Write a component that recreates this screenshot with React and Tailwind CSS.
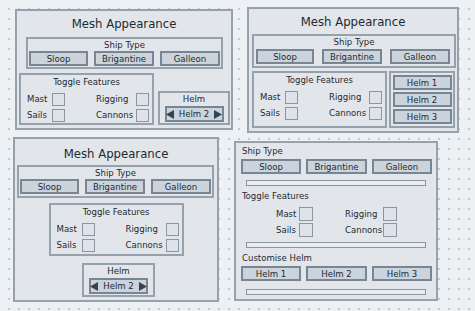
import React from 'react';

const box = 'border-2 border-[#95a1ab] bg-[#e2e6ea]';
const btn = 'border-2 border-[#778692] bg-[#cbd4dc] flex items-center justify-center text-[9.5px] leading-none whitespace-nowrap';
const check = 'border-[1.5px] border-[#8a97a2] bg-[#dde3e8]';

function Tri({ dir }) {
  return (
    <svg width="8" height="9" viewBox="0 0 8 9" className="shrink-0">
      {dir === 'left'
        ? <polygon points="8,0 8,9 0,4.5" fill="#36434d" />
        : <polygon points="0,0 0,9 8,4.5" fill="#36434d" />}
    </svg>
  );
}

function ShipButtons() {
  return (
    <div className="flex gap-[6px]">
      <div className={`${btn} w-[59px] h-[15px]`}>Sloop</div>
      <div className={`${btn} w-[60px] h-[15px]`}>Brigantine</div>
      <div className={`${btn} w-[60px] h-[15px]`}>Galleon</div>
    </div>
  );
}

function Toggles({ h }) {
  return (
    <div className={`${box} w-[135px] ${h} flex flex-col shrink-0`}>
      <div className="h-[12px] leading-[12px] mt-[1px] text-center">Toggle Features</div>
      <div className="mt-[5px] flex flex-col gap-[3px]">
        {[['Mast', 'Rigging'], ['Sails', 'Cannons']].map(([a, b]) => (
          <div key={a} className="flex items-center h-[13px]">
            <span className="ml-[6px] w-[25px]">{a}</span>
            <div className={`${check} w-[13px] h-[13px]`} />
            <span className="ml-[31px] w-[40px]">{b}</span>
            <div className={`${check} w-[13px] h-[13px]`} />
          </div>
        ))}
      </div>
    </div>
  );
}

function HelmPicker({ w }) {
  return (
    <div className={`${box} ${w} h-[34px] flex flex-col items-center shrink-0`}>
      <div className="h-[11px] leading-[11px]">Helm</div>
      <div className={`${btn} mt-[2px] w-[59px] h-[16px] gap-[5px]`}>
        <Tri dir="left" />
        <span>Helm 2</span>
        <Tri dir="right" />
      </div>
    </div>
  );
}

function Separator() {
  return <div className="mx-auto w-[180px] h-[6px] border border-[#8a97a2] bg-[#e9edf0]" />;
}

export default function App() {
  return (
    <div className="relative w-[475px] h-[311px] overflow-hidden bg-[#eef1f4] bg-[radial-gradient(#c3cad1_0.8px,transparent_1px)] bg-[size:10px_10px] bg-[position:4px_4px] text-[#1e2931] text-[9.5px] font-['DejaVu_Sans_Condensed','DejaVu_Sans',sans-serif]">

      {/* Panel 1 */}
      <div className={`absolute left-[15px] top-[9px] w-[218px] h-[121px] ${box} flex flex-col`}>
        <div className="h-[26px] leading-[26px] text-center text-[13px]">Mesh Appearance</div>
        <div className={`${box} ml-[9px] w-[197px] h-[32px] flex flex-col`}>
          <div className="h-[12px] leading-[12px] text-center">Ship Type</div>
          <div className="pl-[1px]"><ShipButtons /></div>
        </div>
        <div className="mt-[4px] ml-[2px] flex items-end gap-[4px]">
          <Toggles h="h-[52px]" />
          <HelmPicker w="w-[72px]" />
        </div>
      </div>

      {/* Panel 2 */}
      <div className={`absolute left-[247px] top-[7px] w-[212px] h-[126px] ${box} flex flex-col`}>
        <div className="h-[25px] leading-[25px] text-center text-[13px]">Mesh Appearance</div>
        <div className={`${box} ml-[3px] w-[204px] h-[34px] flex flex-col`}>
          <div className="h-[12px] leading-[12px] text-center">Ship Type</div>
          <div className="mt-[1px] pl-[2px]">
            <div className="flex gap-[8px]">
              <div className={`${btn} w-[58px] h-[15px]`}>Sloop</div>
              <div className={`${btn} w-[60px] h-[15px]`}>Brigantine</div>
              <div className={`${btn} w-[60px] h-[15px]`}>Galleon</div>
            </div>
          </div>
        </div>
        <div className="mt-[3px] ml-[3px] flex gap-[2px]">
          <Toggles h="h-[57px]" />
          <div className={`${box} w-[66px] h-[57px] flex flex-col items-center pt-[2px] gap-[2px]`}>
            {['Helm 1', 'Helm 2', 'Helm 3'].map(t => (
              <div key={t} className={`${btn} w-[59px] h-[15px]`}>{t}</div>
            ))}
          </div>
        </div>
      </div>

      {/* Panel 3 */}
      <div className={`absolute left-[13px] top-[137px] w-[206px] h-[165px] ${box} flex flex-col`}>
        <div className="h-[26px] pt-[2px] leading-[26px] text-center text-[13px]">Mesh Appearance</div>
        <div className={`${box} ml-[2px] w-[197px] h-[33px] flex flex-col`}>
          <div className="h-[12px] leading-[12px] text-center">Ship Type</div>
          <div className="pl-[1px]"><ShipButtons /></div>
        </div>
        <div className="mt-[5px] flex flex-col items-center gap-[7px]">
          <Toggles h="h-[53px]" />
          <div className="pl-[5px]"><HelmPicker w="w-[73px]" /></div>
        </div>
      </div>

      {/* Panel 4 */}
      <div className={`absolute left-[234px] top-[141px] w-[204px] h-[160px] ${box} flex flex-col`}>
        <div className="pt-[1px] pl-[6px] h-[15px] leading-[14px]">Ship Type</div>
        <div className="ml-[5px] mt-[1px] flex gap-[5px]">
          <div className={`${btn} w-[60px] h-[15px]`}>Sloop</div>
          <div className={`${btn} w-[61px] h-[15px]`}>Brigantine</div>
          <div className={`${btn} w-[60px] h-[15px]`}>Galleon</div>
        </div>
        <div className="mt-[6px]"><Separator /></div>
        <div className="pl-[6px] mt-[3px] h-[14px] leading-[14px]">Toggle Features</div>
        <div className="mt-[4px] flex flex-col gap-[2px]">
          {[['Mast', 'Rigging'], ['Sails', 'Cannons']].map(([a, b]) => (
            <div key={a} className="flex items-center h-[14px] pl-[40px]">
              <span className="w-[23px]">{a}</span>
              <div className={`${check} w-[14px] h-[14px]`} />
              <span className="ml-[32px] w-[38px]">{b}</span>
              <div className={`${check} w-[14px] h-[14px]`} />
            </div>
          ))}
        </div>
        <div className="mt-[5px]"><Separator /></div>
        <div className="pl-[6px] mt-[3px] h-[14px] leading-[14px]">Customise Helm</div>
        <div className="ml-[5px] mt-[1px] flex gap-[5px]">
          <div className={`${btn} w-[60px] h-[15px]`}>Helm 1</div>
          <div className={`${btn} w-[61px] h-[15px]`}>Helm 2</div>
          <div className={`${btn} w-[60px] h-[15px]`}>Helm 3</div>
        </div>
        <div className="mt-[8px]"><Separator /></div>
      </div>
    </div>
  );
}
